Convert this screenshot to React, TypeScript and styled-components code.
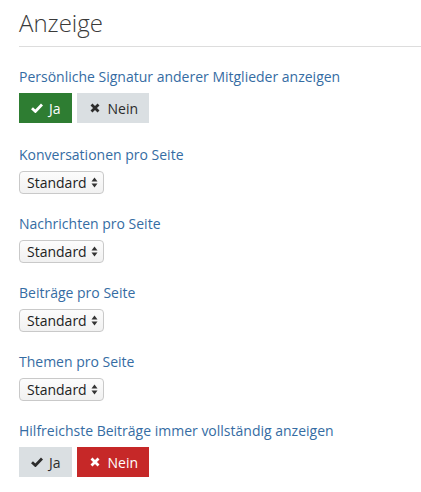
import styled, { createGlobalStyle } from "styled-components";

const GlobalStyle = createGlobalStyle`
    body {
        margin: 0;
        background: #fff;
        font-family: "Open Sans", "Liberation Sans", sans-serif;
        color: #3a3a3a;
    }
`;

const Section = styled.section`
    padding: 8px 0 0 19px;
`;

const Title = styled.h2`
    margin: 0;
    padding-bottom: 8px;
    font-size: 24px;
    font-weight: 300;
    line-height: 30px;
    color: #3a3a3a;
    border-bottom: 1px solid #dddddd;
`;

const FieldList = styled.dl`
    margin: 0;
    padding-top: 20px;
    display: flex;
    flex-direction: column;
    gap: 20px;
`;

const Field = styled.div<{ $toggle?: boolean }>`
    display: flex;
    flex-direction: column;
    gap: 6px;
    margin-bottom: ${p => p.$toggle ? "2px" : "0"};
`;

const Label = styled.dt`
    font-size: 14px;
    line-height: 20px;
    color: #356ca3;
`;

const Control = styled.dd`
    margin: 0;
    display: flex;
    gap: 5px;
`;

type Variant = "success" | "danger" | "plain";

const colors: Record<Variant, { bg: string; fg: string }> = {
    success: { bg: "#2e7d32", fg: "#ffffff" },
    danger: { bg: "#c62828", fg: "#ffffff" },
    plain: { bg: "#dadfe2", fg: "#2c2c2c" },
};

const Toggle = styled.button<{ $variant: Variant }>`
    display: flex;
    align-items: center;
    gap: 6px;
    height: 30px;
    padding: 0 11px 0 12px;
    border: 0;
    border-radius: 0;
    font-family: inherit;
    font-size: 14px;
    background: ${p => colors[p.$variant].bg};
    color: ${p => colors[p.$variant].fg};
    cursor: pointer;
`;

const Select = styled.div`
    display: inline-flex;
    align-items: center;
    gap: 4px;
    height: 21px;
    padding: 0 5px 0 7px;
    border: 1px solid #c9c9c9;
    border-radius: 4px;
    background: linear-gradient(#fcfcfc, #f1f1f1);
    font-size: 14px;
    color: #222;
`;

const Check = () => (
    <svg width="12" height="10" viewBox="0 0 12 10">
        <path d="M1 5.2 L4.4 8.4 L11 1.6" fill="none" stroke="currentColor" strokeWidth="2.8" />
    </svg>
);

const Cross = () => (
    <svg width="13" height="10" viewBox="0 0 13 10">
        <path d="M2.5 1.5 L9.5 8.5 M9.5 1.5 L2.5 8.5" fill="none" stroke="currentColor" strokeWidth="2.8" />
    </svg>
);

const Arrows = () => (
    <svg width="7" height="11" viewBox="0 0 7 11">
        <path d="M3.5 0.5 L6.5 4.5 L0.5 4.5 Z M3.5 10.5 L6.5 6.5 L0.5 6.5 Z" fill="#333" />
    </svg>
);

function YesNo({ yes }: { yes: boolean }) {
    return (
        <Control>
            <Toggle $variant={yes ? "success" : "plain"}><Check />Ja</Toggle>
            <Toggle $variant={yes ? "plain" : "danger"}><Cross />Nein</Toggle>
        </Control>
    );
}

const selects = [
    "Konversationen pro Seite",
    "Nachrichten pro Seite",
    "Beiträge pro Seite",
    "Themen pro Seite",
];

function App() {
    return (
        <Section>
            <GlobalStyle />
            <Title>Anzeige</Title>
            <FieldList>
                <Field $toggle>
                    <Label>Persönliche Signatur anderer Mitglieder anzeigen</Label>
                    <YesNo yes={true} />
                </Field>
                {selects.map(item =>
                    <Field key={item}>
                        <Label>{item}</Label>
                        <Control>
                            <Select>Standard <Arrows /></Select>
                        </Control>
                    </Field>
                )}
                <Field>
                    <Label>Hilfreichste Beiträge immer vollständig anzeigen</Label>
                    <YesNo yes={false} />
                </Field>
            </FieldList>
        </Section>
    );
}

export default App;
